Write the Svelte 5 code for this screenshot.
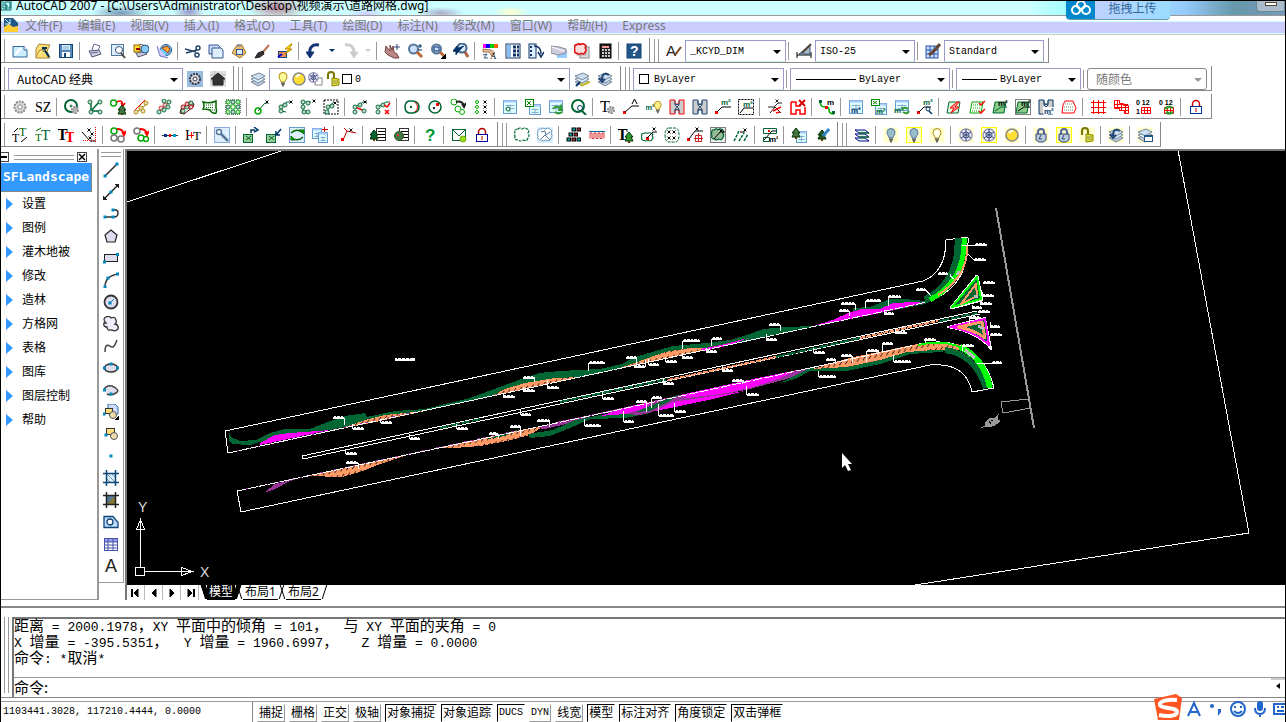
<script lang="ts">
	type Select = { label: string; value: string; width: number; deco?: string; pad?: number; disabled?: boolean; big?: boolean };
	type Item = string | Select;

	// Small helpers that build the 16x16 toolbar glyphs
	const p = (d: string, stroke = '#000', fill = 'none', w = 1) =>
		`<path d="${d}" stroke="${stroke}" fill="${fill}" stroke-width="${w}"/>`;
	const r = (x: number, y: number, w: number, h: number, fill: string, stroke = 'none') =>
		`<rect x="${x}" y="${y}" width="${w}" height="${h}" fill="${fill}" stroke="${stroke}"/>`;
	const c = (x: number, y: number, rad: number, stroke = '#060', fill = 'none', w = 1) =>
		`<circle cx="${x}" cy="${y}" r="${rad}" stroke="${stroke}" fill="${fill}" stroke-width="${w}"/>`;
	const t = (x: number, y: number, s: string, size: number, fill = '#000', family = 'Liberation Serif', weight = 400) =>
		`<text x="${x}" y="${y}" font-size="${size}" fill="${fill}" font-family="${family}, serif" font-weight="${weight}">${s}</text>`;

	const node = (x: number, y: number, col = '#063') => c(x, y, 2, col, '#fff') + r(x - 0.5, y - 0.5, 1, 1, col);
	const cross = (x: number, y: number, col = '#000') => p(`M${x - 1.5} ${y - 1.5}l3 3m0-3l-3 3`, col);
	const m2 = (x: number, y: number, col = '#063') => t(x, y, 'm²', 8, col, 'Liberation Sans', 700);
	const tree = (x: number, y: number, col = '#063') =>
		p(`M${x} ${y}l-4 5h2l-2 4h8l-2-4h2z`, '#030', col) + p(`M${x} ${y + 9}v2`, '#630', 'none', 2);
	const gear = (x: number, y: number, col = '#888', k = 5) =>
		`<circle cx="${x}" cy="${y}" r="${k}" fill="#ddd" stroke="${col}" stroke-width="2" stroke-dasharray="2 1"/>` + c(x, y, k / 2.5, col, '#fff');
	const sheet = (x: number, y: number, w: number, h: number) =>
		r(x, y, w, h, '#dff', '#69c') + r(x, y, w, 2, '#acf') +
		p(`M${x + 2} ${y + 5}h${w - 4}M${x + 2} ${y + 8}h${w - 4}M${x + w / 2} ${y + 4}v${h - 5}`, '#8ac');
	const bulb = (fill: string, col: string) =>
		p('M6 11C6 9 4 8 4 5.500A4 4 0 0 1 12 5.500C12 8 10 9 10 11Z', col, fill) + p('M6 12.500h4M7 14.500h2', '#666', 'none', 2);
	const hot = (inner: string, framed = false) => r(0.5, 0.5, 15, 15, '#ffc', framed ? '#ff0' : 'none') + inner;
	const lock = (body: string, col: string) => p('M4.500 7V5a3.500 3.500 0 0 1 7 0V7', col, 'none', 1.5) + r(2.5, 7.5, 11, 7, '#fff', body) + p('M8 9v4', col);
	const padlock = p('M5 8V5a3 3 0 0 1 6 0V8', '#569', 'none', 2) + p('M3 7h10v6l-3 2H6L3 13Z', '#347', '#bcd') + p('M8 8l-2 4h3', '#347');
	const openlock = p('M3 8V4a3 3 0 0 1 6 0v3', '#770', 'none', 2) + p('M7 7l7 1v6l-7 1z', '#880', '#dd3') + p('M8 10h5M8 12h5', '#996');
	const layers = p('M1 11l8-3 6 3-7 4z', '#789', '#bcd') + p('M1 8l8-3 6 3-7 4z', '#789', '#def') + p('M1 5l8-3 6 3-7 4z', '#789', '#cde');
	const ball = c(8, 8, 6, '#888', '#fd3', 1.5) + p('M5 6a4 4 0 0 1 4-2', '#fff', 'none', 2);
	const flake = c(8, 8, 6, '#99b', '#eef', 1.5) + p('M8 2v12M3 5l10 6M3 11l10-6', '#347') + c(8, 8, 3, '#347');
	const blob = 'M4 2q2-2 4 0 3-2 5 0 3 1 1 4 2 3 0 5-1 4-5 2-3 2-5 0-4 0-3-4-1-3 0-4-1-3 3-3z';
	const plot = 'M3 3h11l-2 11H1z';
	const gate = (col: string) => p('M1 1h5v4h4V1h5v14h-5v-4H6v4H1z', col, '#ccc') + p('M6 5.500h4M6 10.500h4M6 2v4l2 2 2-2V2M6 14v-4l2-2 2 2v4', '#357', 'none', 1);
	const magnifier = c(6.5, 6, 4.5, '#579', '#cdf', 2) + p('M10 9l5 5', '#b63', 'none', 3);
	const printer = p('M5 7L7 1l6 2-2 5', '#669', '#fff') + p('M2 8l10-1 2 4-9 3z', '#557', '#ccd') + p('M4 10l7-1', '#669', 'none', 1);

	const icons: Record<string, string> = {
		new: p('M1 3.500H12L15 7V14H1Z', '#369', '#cef') + p('M12 3v4h3', '#369', '#fff') + p('M3 12L9 5', '#fff', 'none', 2),
		open: p('M1 6L4 1l11 1-3 6 3 7H1z', '#a83', '#fd7') + p('M14 14L9 6M8 9V5h4', '#035', 'none', 2) + p('M1 14L5 7h5', '#a83', '#fe9'),
		save: r(1.5, 1.5, 13, 13, '#58b', '#147') + r(4, 2, 8, 5, '#def') + r(4, 9, 8, 5, '#fff') + r(6, 10, 2, 4, '#147') + p('M5 4h6M5 6h6', '#7ac'),
		print: printer,
		preview: r(1.5, 1.5, 12, 11, '#def', '#579') + c(9, 7, 3.5, '#357', '#fff') + p('M11 10l4 5', '#543', 'none', 2),
		publish: printer + r(1, 2, 6, 7, '#fd3', '#960') + c(12, 6, 4, '#357', '#8cf') + r(3, 5, 4, 2, '#900'),
		globe: c(10, 7, 5.5, '#358', '#6cf') + p('M6 5l5-2 3 3-2 4z', '#a31', '#fa3') + p('M1 3l3 10 8 2', '#77c', '#ccf'),
		cut: p('M0 6l11 3M1 10l11-3', '#246', 'none', 1.5) + c(13, 5, 2, '#246', 'none', 1.5) + c(12, 12, 2, '#246', 'none', 1.5),
		copy: p('M1 2h9l2 2v7H1z', '#358', '#cdf') + p('M4 5h9l2 2v8H4z', '#358', '#def'),
		paste: p('M1 10L6 2h5l4 8-6 5z', '#973', '#eb6') + r(5.5, 6.5, 6, 5, '#def', '#358') + r(6, 1, 4, 3, '#999'),
		brush: p('M15 2L9 9', '#b75', 'none', 2) + p('M1 15l3-5 5-2 1 3-4 3z', '#222', '#333'),
		match: r(1.5, 8.5, 8, 6, '#e85', '#147') + p('M14 1L8 6h4L8 11l7-5h-3l3-5z', '#b80', '#fe0') + p('M1 14l4-3', '#00c', 'none', 2),
		undo: p('M13 2C6 1 3 5 4 10', '#137', 'none', 3) + p('M0 9h8l-4 6z', '#137', '#137'),
		redo: p('M3 2C10 1 12 5 12 10', '#ccc', 'none', 3) + p('M8 9h8l-4 6z', '#ccc', '#ccc'),
		pan: p('M2 3l4 5V2l2 5 1-4 1 6 3 2 2 4h-5L4 12 1 9z', '#744', '#b88') + p('M13 1v6M10 4h6', '#347'),
		zoomrt: magnifier + p('M11 3h4M13 1v4M11 7h4', '#036'),
		zoomwin: magnifier + p('M4 4h5v4H4z', '#036') + p('M16 11v5h-5z', '#000', '#000'),
		zoomprev: c(9, 5, 4.5, '#468', '#def', 2) + p('M12 9l3 5', '#a64', 'none', 3) + p('M3 12V6l8-3M0 8l4-5 1 6z', '#036', '#036'),
		props: r(1, 1, 3, 4, '#f0f') + r(4, 1, 4, 4, '#00f') + r(8, 1, 4, 4, '#0c0') + r(12, 1, 4, 4, '#f60') + p('M1 6l8 1 4 3-3 3-3-4H1z', '#975', '#eb9') + t(8, 16, 'A', 9) + p('M1 12l4-1-3 4h4', '#357'),
		dc: r(1, 1, 14, 14, '#fff', '#136') + r(2, 2, 4, 12, '#8be') + [3, 7, 11].map((y) => r(8.5, y, 2, 2, '#fff', '#136') + r(12.5, y, 1, 2, '#fff', '#136')).join(''),
		palettes: r(1, 1, 7, 14, '#def', '#136') + p('M3 3v2M3 7v2M3 11v2', '#136', 'none', 2) + p('M6 3q7 0 7 8M10 9l3 5 3-5', '#136', 'none', 1.5),
		sheets: r(6, 7, 10, 8, '#9cf') + p('M0 3l8 1 7 2v4l-8 2-7-2z', '#889', '#ccd') + p('M1 4l12 4', '#fff'),
		markup: r(6, 4, 9, 11, '#ddd', '#888') + r(3, 2, 9, 10, '#fff', '#aaa') + `<g transform="scale(.8)">${p(blob, '#d11', '#fdd', 2)}</g>`,
		calc: r(3, 1, 11, 14, '#222', '#000') + r(5, 3, 7, 2, '#f99') + p('M5 7h8M5 10h8M5 13h8', '#fff', 'none', 1.5) + p('M7.500 6v8M10.500 6v8', '#222'),
		help: r(1, 1, 14, 14, '#258', '#147') + t(4, 13, '?', 14, '#fff', 'Liberation Sans', 700),
		textstyle: t(0, 13, 'A', 15, '#222', 'Liberation Sans') + p('M15 4l-6 8', '#742', 'none', 2),
		dimstyle: p('M1 9v6M15 9v6M1 12h14', '#000') + p('M3 11L14 2v9z', '#357', '#abc') + p('M15 1L6 10', '#543', 'none', 2),
		tablestyle: r(1, 3, 12, 12, '#cdf', '#25a') + p('M1 7h12M1 11h12M5 3v12M9 3v12', '#25a') + p('M15 1L8 9l-4 3', '#643', 'none', 3),
		wsgear: r(0, 0, 16, 16, '#9bd') + gear(8, 8, '#334', 5),
		wshome: r(0, 0, 16, 16, '#ddd') + p('M0 4h16M0 10h16M5 0v16', '#bbb') + p('M3 14V8L1 8l7-6 7 6h-2v6z', '#222', '#333'),
		layers,
		layprev: layers + p('M2 15l4-4', '#036', 'none', 2) + p('M6 13l3 1 7-3', '#cb2', 'none', 2),
		layundo: layers + p('M12 4Q5 0 5 9M2 7l3 4 3-3', '#247', 'none', 2),
		gear: gear(8, 8, '#888', 5.5),
		sz: t(0, 13, 'SZ', 14),
		treegear: c(7, 7, 6, '#063', '#fff', 2) + c(7, 7, 1, '#063') + gear(11, 11, '#888', 3),
		nodes3: p('M4 3v9h9M4 12L13 2', '#063', 'none', 1.5) + node(3, 3) + node(13, 3) + node(4, 13) + node(13, 13),
		treefrom: c(3.5, 4, 3, '#0a0', '#fff', 1.5) + p('M7 3q5-3 6 3M11 4l2 3 2-3', '#f00', 'none', 1.5) + tree(12, 6, '#474'),
		row1: p('M1 12L12 1', '#f00') + p('M2 15L15 4', '#960') + node(3, 13, '#a80') + node(8, 9, '#a80') + node(13, 4, '#a80') + node(10, 12, '#a80'),
		row2: p('M3 13L13 3', '#900') + node(3, 13) + node(5, 9, '#c33') + node(8, 11) + node(9, 6, '#c33') + node(12, 8) + node(13, 3) + node(8, 2),
		row3: p('M2 10l9-8 4 3-1 3-9 7-4-1z', '#500', '#fff') + node(4, 12) + node(4, 8, '#a00') + node(8, 8) + node(8, 5, '#a00') + node(12, 4) + node(12, 8, '#a00'),
		flag: p('M1 3q7 2 13-1v7q1 3 0 5-4 1-6-3-3-1-7-1 2-4 0-7z', '#060', '#fff', 1.5) + `<path d="M4 6h8M4 8.500h8M8 11h5" stroke="#060" stroke-dasharray="1 1"/>`,
		grid9: `<rect x="1" y="1" width="14" height="14" fill="none" stroke="#000" stroke-dasharray="1 1"/>` + [3, 13].map((x) => node(x, 3, '#0a0') + node(x, 13, '#0a0')).join('') + r(6, 6, 4, 4, '#fff', '#0a0') + node(8, 3) + node(8, 13) + node(3, 8) + node(13, 8),
		pick1: c(4, 12, 3, '#0a0', '#fff', 1.5) + p('M4 12L11 4h3', '#063') + cross(13, 3),
		pick2: p('M4 12V7l6-4h4M4 12l5 1', '#063') + node(4, 12) + node(4, 8) + node(8, 6) + cross(14, 3),
		pick3: p('M3 3h8M3 3v10h4', '#063') + node(3, 3) + node(3, 8) + node(4, 13) + node(8, 4) + node(8, 13) + cross(14, 2),
		pick4: `<rect x="1" y="1" width="14" height="14" fill="none" stroke="#000" stroke-dasharray="2 1"/>` + p('M5 13V8l6-5', '#063') + node(4, 13) + node(5, 8) + node(9, 7) + cross(12, 4),
		link1: p('M3 8L11 3h4', '#063') + p('M3 8l10 4', '#f00', 'none', 1.5) + node(3, 8) + node(3, 13) + node(8, 6) + node(12, 12) + cross(13, 3),
		link2: p('M3 8L11 3h4', '#063') + node(3, 8) + node(3, 13) + node(8, 6) + p('M9 6l3 2 3-4M10 11l4 4m0-4l-4 4', '#f00', 'none', 1.500),
		ring: p('M5 2h4q6 1 6 6t-6 6H5Q1 13 1 8t4-6z', '#063', 'none', 1.5) + p('M11 3q5 5 0 10', '#c00', 'none', 1) + r(6, 7, 2, 2, '#063'),
		circlered: c(8, 8, 6, '#063', '#fff', 1.5) + r(6, 8, 2, 2, '#222') + r(9, 4, 3, 3, '#f00'),
		treecopy: c(4, 3, 3, '#0a0', '#fff') + c(8, 10, 3, '#0a0', '#fff') + c(12, 13, 2.500, '#0a0', '#fff') + p('M6 3q5-2 8 3M12 5l2 3 2-4', '#222', 'none', 2),
		dots: [3, 8, 13].map((y) => c(4, y, 1.5, '#0a0') + cross(12, y)).join(''),
		sheetdot: sheet(1.5, 1.5, 13, 13) + c(6, 10, 2, '#063', '#fff'),
		sheetxl: sheet(4.5, 5.5, 11, 10) + r(0.5, 0.5, 8, 7, '#fff', '#080') + p('M2 2l4 4m0-4L2 6', '#080'),
		sheetref: sheet(1.5, 1.5, 13, 12) + p('M5 10q3-4 7-1l1-2 1 4h-4M14 13q-4 3-7 0', '#393', 'none', 2),
		ringq: c(7, 7, 6, '#063', '#fff', 2) + c(9, 9, 2.500, '#036', '#fff') + p('M10 11l5 5', '#063', 'none', 2),
		tgear: t(0, 13, 'T', 16, '#000') + gear(11, 11, '#888', 3),
		leaderA: r(0, 12, 3, 3, '#f00') + p('M2 13L9 7h7M9 5l2.500-5L14 5', '#000'),
		m2bulb: m2(-1, 11) + `<g transform="translate(5 1) scale(.85)">${bulb('#fe8', '#a80')}</g>`,
		gatered: gate('#f00'),
		gateblue: gate('#247'),
		leaderm2: r(0, 12, 3, 3, '#f00') + p('M2 13L7 8h9', '#000') + m2(6, 6),
		boxm2: `<rect x=".5" y=".5" width="15" height="15" fill="none" stroke="#000" stroke-dasharray="2 1"/>` + p('M2 14l4-5h9', '#000') + m2(5, 8),
		xlines: p('M1 8h6l4-4h4M3 14l5-6 6 6', '#222') + cross(10, 2, '#222') + p('M6 12l8-4M9 14l4-1', '#f00', 'none', 1.5),
		gatex: p('M1 3h5v4h4V5M1 3v12h5v-4h4v4h5V8', '#f00', '#fff', 1.5) + p('M9 1l6 6m0-6L9 7', '#d00', 'none', 2),
		curve: p('M1 2q0 6 5 6t4 4q1 3 5 3', '#0a0', 'none', 1.500) + t(8, 6, 'm', 8, '#000', 'Liberation Sans', 700) + r(0, 1, 3, 3, '#063') + r(6, 7, 3, 3, '#f00') + r(13, 12, 3, 3, '#063'),
		shm2: sheet(1.5, 1.5, 13, 13) + m2(3, 14, '#036'),
		xlm2: sheet(4.5, 4.5, 11, 11) + r(0.5, 0.5, 8, 6, '#fff', '#080') + p('M2 2l4 3m0-3L2 5', '#080') + m2(5, 15),
		refm2: sheet(1.5, 1.5, 13, 10) + m2(0, 14) + p('M8 11q2-4 6-1M15 12q-2 4-6 1', '#393', 'none', 2),
		leadq: r(0, 12, 3, 3, '#f00') + p('M2 13L7 8h7', '#000') + m2(6, 6) + c(11, 10, 2, '#036') + p('M12 12l3 3', '#036', 'none', 1.5),
		plotbolt: p(plot, '#063', '#dfd') + p('M11 3L4 9h4l-3 5 8-6H9l4-5z', '#f00', '#f99'),
		plotcheck: p(plot, '#0a0', '#fff') + `<path d="M4 6h8M4 9h7M3 12h7" stroke="#0a0" stroke-dasharray="1 1"/>` + p('M10 4l2 2 4-4M10 12l2 2 4-4', '#f00', 'none', 1.500),
		plotm2: p(plot, '#063', '#8c8') + p('M3 12L9 8h6', '#063') + m2(6, 7, '#000'),
		plotboxm2: `<rect x=".5" y=".5" width="15" height="15" fill="none" stroke="#000" stroke-dasharray="1 1"/>` + p(plot, '#063', '#8c8') + m2(6, 7, '#000') + p('M3 12l6-4h6', '#000'),
		binm2: gate('#036') + r(5, 8, 11, 7, '#fff') + m2(6, 15, '#036'),
		plotred: p('M4 2h8l3 7-2 5H1l1-8z', '#f00', '#fff') + `<path d="M4 5h8M3 8h10M3 11h10" stroke="#696" stroke-dasharray="1 1"/>`,
		gridred: p('M3.500 1v14M8.500 1v14M13.500 1v14M1 3.500h15M1 8.500h15M1 13.500h15', '#f00'),
		meshred: p('M1.500 1.500h5v3h4v2h5v8h-4v-3h-5v-2h-5zM4.500 1v9M8.500 4v8M12.500 6v9M1 5.500h14M1 8.500h14M6 11.500h9', '#f00'),
		gridnum: p('M5.500 8.500h9v6h-9zM8.500 8v7M11.500 8v7M5 11.500h10', '#f00') + t(0, 6, '0 12', 7, '#000', 'Liberation Sans', 700) + t(0, 15, '1', 7, '#000', 'Liberation Sans', 700),
		gridnumref: p('M5.500 8.500h9v6h-9zM8.500 8v7M11.500 8v7M5 11.500h10', '#f00') + t(0, 6, '0 12', 7, '#000', 'Liberation Sans', 700) + p('M6 10q3-4 8-1M14 13q-4 3-7 0', '#393', 'none', 2.5),
		lock: lock('#039', '#c00'),
		lockred: lock('#009', '#a00'),
		tflip: p('M2 5L6 1M9 15l6-5', '#000') + t(0, 15, 'T', 12) + t(7, 9, 'T', 12, '#060'),
		ttree: t(0, 14, 'T', 11, '#060') + t(6, 13, 'T', 15, '#063') + p('M1 4l5-3', '#060'),
		tt: t(-1, 13, 'T', 16, '#000', 'Liberation Serif', 700) + t(7, 15, 'T', 15, '#f00', 'Liberation Serif', 700),
		tdiag: p('M1 5l8 9h6', '#000') + cross(8, 3) + cross(11, 7) + cross(9, 11) + `<path d="M14.500 0v16M2 13.500h12" stroke="#f00" stroke-dasharray="1 1"/>`,
		replant: c(4, 4, 3, '#0a0', '#fff', 1.500) + c(4, 11, 3, '#777', '#fff', 1.500) + c(11, 12, 3, '#777', '#fff', 1.500) + p('M7 2q6 0 7 5M12 5l2 3 2-4', '#f00', 'none', 2),
		replant2: c(4, 4, 3, '#777', '#fff', 1.500) + c(8, 11, 3, '#0a0', '#fff', 1.500) + c(13, 12, 2.500, '#0a0', '#fff', 1.500) + p('M7 2q6 0 7 5M12 5l2 3 2-4', '#f00', 'none', 2),
		hline: p('M0 8.500h16', '#333') + r(2, 7, 3, 3, '#039') + r(7, 7, 2, 3, '#f00') + r(11, 7, 3, 3, '#09c'),
		tplus: t(0, 13, 'I', 14) + t(8, 13, 'T', 13) + p('M3 8.500h6M6.500 5v6', '#f00'),
		wrench: r(0.5, 0.5, 15, 15, '#def', '#8ad') + p('M6 6l8 8', '#579', 'none', 2.5) + c(5, 5, 2.5, '#579', '#fff', 1.5),
		out1: r(0.5, 7.5, 9, 8, '#9c9', '#063') + p('M3 9l5 4m0-4l-5 4', '#063') + p('M8 6V3h4M11 0l4 3-4 2', '#036', 'none', 1.5),
		in1: r(0.5, 7.5, 9, 8, '#9c9', '#063') + p('M3 9l5 4m0-4l-5 4', '#063') + p('M15 2l-4 5M10 4v4h4', '#036', 'none', 1.500),
		syncg: r(0.5, 0.5, 15, 15, '#def', '#69c') + p('M2 6q5-5 11-1M14 10q-5 5-11 1', '#060', 'none', 1.5) + p('M10 3l5 0v4zM6 13H2V9z', '#060', '#0a0'),
		pagesplus: sheet(0.5, 1.5, 9, 10) + sheet(6.5, 5.5, 9, 10) + p('M12.500 0v5M10 2.500h6', '#d00'),
		vx: r(0, 11, 3, 3, '#f00') + p('M2 13L6 4 3 1M6 4l9 2', '#c00') + cross(10, 3, '#222'),
		treelist: r(6.5, 1.5, 9, 12, '#fff', '#333') + p('M8 4.500h7M8 7.500h7M8 10.500h7', '#000') + tree(4, 3, '#063'),
		bushlist: r(6.5, 1.5, 9, 12, '#fff', '#333') + p('M8 4.500h7M8 7.500h7M8 10.500h7', '#000') + c(6, 9, 4.500, '#252', '#474') + r(4, 7, 2, 2, '#d33'),
		qgreen: t(3, 14, '?', 17, '#093', 'Liberation Sans', 700),
		mail: r(1.5, 2.5, 13, 11, '#fff', '#063') + p('M1 2l7 7 7-7', '#063') + c(12, 12, 3, '#7a0', '#9d2'),
		cloud: `<g stroke-dasharray="3 1">${p(blob, '#063', '#fff', 1.2)}</g>`,
		cloud2: r(0, 0, 16, 16, '#def') + p(blob, '#69b', '#fff', 1) + p('M4 5l4-1 1 4 4-3M4 12l4-4 5 5', '#579'),
		blocks: [[6, 1], [11, 1], [3, 6], [8, 6], [1, 11], [6, 11], [11, 11]].map(([x, y], i) => r(x, y, 3.500, 3, i % 2 ? '#a33' : '#0aa', '#000')).join(''),
		wave: p('M1 11.500V6h2v5.500h2V6h2v5.500h2V6h2v5.500h2V6h2v5.500', '#d33') + p('M0 4.500h16', '#069'),
		ttreeg: t(-1, 13, 'T', 16, '#000', 'Liberation Serif', 700) + tree(11, 5, '#393'),
		cloudpick: `<g transform="translate(0 5) scale(.8 .65)">${p(blob, '#063', '#fff', 1.5)}</g>` + r(5, 10, 3, 3, '#f00') + p('M6 11l6-6h4', '#000') + cross(13, 2),
		oval: `<g stroke-dasharray="3 1">${p('M5 1h6q4 0 4 7t-4 7H5q-4 0-4-7t4-7z', '#063')}</g>` + cross(5, 5) + cross(10, 5) + cross(5, 11) + cross(10, 11),
		mtext: r(0, 11, 3, 3, '#f00') + p('M2 12l6-8h8', '#000') + cross(10, 2) + p('M8.500 8.500h6v6h-6zM11.500 6v9M7 11.500h9', '#c22'),
		hatchbox: `<rect x=".5" y=".5" width="15" height="15" fill="#eee" stroke="#000" stroke-dasharray="1 1"/>` + `<g transform="translate(1 1) scale(.85)">${p(blob, '#063', '#9b9', 1.5)}</g>` + p('M4 12l6-7h5', '#000') + cross(11, 4),
		slashes: `<g stroke-dasharray="3 1">${p('M1 14L6 4M6 14l5-8M11 14l4-7', '#063', 'none', 1.5)}</g>` + cross(12, 3) + p('M7 5h5', '#000'),
		plan: p('M1.500 1.500h13v5h-13zM1.500 10.500h6v4h-6z', '#063', '#fff') + p('M2 13L10 4h4', '#000') + r(6, 3, 2, 2, '#f00') + m2(7, 15, '#000'),
		treetable: sheet(5.5, 4.500, 10, 11) + tree(5, 1, '#474'),
		treepen: tree(8, 3, '#252') + p('M15 2L9 9', '#38c', 'none', 3),
		stack: p('M1 3h10l4 3H5zM1 7h10l4 3H5zM1 11h10l4 3H5z', '#009', '#dfd') + p('M5 6h10M5 10h10', '#070'),
		bulbOff: hot(bulb('#9bc', '#579')),
		bulbOffF: hot(bulb('#9bc', '#579'), true),
		bulbOn: hot(bulb('#ffe', '#a80')),
		flake: hot(flake),
		flakeF: hot(flake, true),
		sun: hot(ball),
		pad: hot(padlock),
		padF: hot(padlock, true),
		padOpen: hot(openlock),
		layhot: hot(layers + p('M12 4Q5 0 5 9M2 7l3 4 3-3', '#247', 'none', 2)),
		laywin: hot(layers) + r(7.5, 8.5, 8, 6, '#fff', '#258') + r(7, 8, 9, 2, '#258')
	};

	const blue = (x: number, y: number) => r(x - 1.5, y - 1.5, 3, 3, '#08b');
	const drawTools: [string, string][] = [
		['直线', p('M2 14L14 2', '#222', 'none', 1.5) + blue(2, 14) + blue(14, 2)],
		['构造线', p('M1 15L15 1', '#222', 'none', 1.5) + p('M0 12v4h4zM16 4V0h-4z', '#222', '#222') + blue(8, 8)],
		['多段线', p('M2 11h9q4 0 4-4t-5-3', '#333', 'none', 1.5) + blue(2, 11) + blue(10, 11) + blue(10, 4)],
		['正多边形', p('M8 2l6 5-2 7H4L2 7z', '#222', '#dde', 1.2)],
		['矩形', r(1.5, 4.5, 13, 7, '#dde', '#222') + blue(1.5, 12) + blue(14.5, 4.5)],
		['圆弧', p('M2 15Q2 4 15 2', '#333', 'none', 1.5) + blue(2, 15) + blue(5, 6) + blue(14.5, 2)],
		['圆', c(8, 8, 6.5, '#333', '#dde', 1.8) + p('M7 9l4-4', '#08b') + blue(7, 9)],
		['修订云线', p('M3 7Q-1 3 3 1q3-2 5 1 4-2 5 2 1 3-1 4 4 1 3 5-3 3-6 1-5 1-5-3-4 0-3-4z', '#333', '#eef', 1.3)],
		['样条曲线', p('M2 14C2 2 8 10 10 9S13 4 14 2', '#444', 'none', 1.5)],
		['椭圆', `<ellipse cx="8" cy="8" rx="6.500" ry="4" fill="#dde" stroke="#333" stroke-width="1.500"/>` + blue(1.5, 8) + blue(8, 4) + blue(14.5, 8)],
		['椭圆弧', p('M4 12Q8 14 13 11T9 4Q3 3 1 8', '#444', '#dde', 1.5) + blue(1.5, 8) + blue(8, 12)],
		['插入块', p('M5 0h7l3 3v7H5z', '#369', '#cdf') + r(2.5, 4.5, 7, 5, '#fd7', '#333') + c(10, 11, 3.5, '#555', '#eda') + blue(1, 10) + p('M16 12v4h-4z', '#000', '#000')],
		['创建块', r(3.5, 2.5, 8, 6, '#fd7', '#333') + c(11, 10, 3.5, '#555', '#eda') + blue(3, 9)],
		['点', blue(8, 8)],
		['图案填充', r(3, 3, 10, 10, '#def') + p('M3 3l10 10M3 8l5 5M8 3l5 5', '#69a') + p('M0 3.500h16M0 12.500h16M3.500 0v16M12.500 0v16', '#147', 'none', 1.5)],
		['渐变色', r(3, 3, 10, 10, '#579') + p('M3 13L13 3v10z', 'none', '#873') + p('M0 3.500h16M0 12.500h16M3.500 0v16M12.500 0v16', '#222', 'none', 1.5)],
		['面域', p('M1 2.500h9l5 6v5H1z', '#147', '#bdf', 1.3) + c(7, 8, 3, '#147', '#fff', 1.3)],
		['表格', r(1.5, 2.5, 13, 12, '#fff', '#45a') + r(2, 3, 12, 3, '#99e') + p('M2 6h12M2 9h12M2 12h12M5 3v11M10 3v11', '#45a')],
		['多行文字', t(2, 14, 'A', 18, '#222', 'Liberation Sans')]
	];

	const sw = r(0.5, 3.5, 9, 9, '#fff', '#000');
	const layerDeco =
		`<svg width="90" height="16">${bulb('#ff9', '#a80')}<g transform="translate(16)">${ball}</g><g transform="translate(32)">${r(8, 7, 7, 7, '#fff', '#888')}${`<g transform="scale(.8)">${flake}</g>`}</g><g transform="translate(50)">${openlock}</g><g transform="translate(67)">${sw}</g></svg>`;
	const swatch = `<svg width="12" height="16">${sw}</svg>`;
	const rule = (w: number) => `<svg width="${w}" height="16">${p(`M0 8.500h${w}`)}</svg>`;

	const split = (s: string) => s.split(' ');

	const rows: Item[][][] = [
		[
			split('new open save | print preview publish globe | cut copy paste brush match | undo ▾ redo ▿ | pan zoomrt zoomwin zoomprev | props dc palettes sheets markup calc | help'),
			[
				'textstyle', { label: '文字样式', value: '_KCYD_DIM', width: 101 }, '|',
				'dimstyle', { label: '标注样式', value: 'ISO-25', width: 100 }, '|',
				'tablestyle', { label: '表格样式', value: 'Standard', width: 100 }
			]
		],
		[
			[{ label: '工作空间', value: 'AutoCAD 经典', width: 175, pad: 8, big: true }, 'wsgear', 'wshome'],
			['layers', { label: '图层', value: '0', width: 301, pad: 85, deco: layerDeco }, 'layprev', 'layundo'],
			[
				{ label: '颜色', value: 'ByLayer', width: 151, pad: 20, deco: swatch }, '|',
				{ label: '线型', value: 'ByLayer', width: 160, pad: 68, deco: rule(60) }, '|',
				{ label: '线宽', value: 'ByLayer', width: 125, pad: 43, deco: rule(35) }, '|',
				{ label: '打印样式', value: '随颜色', width: 120, pad: 8, disabled: true, big: true }
			]
		],
		[
			split('gear sz | treegear nodes3 treefrom row1 row2 row3 flag grid9 | pick1 pick2 pick3 pick4 | link1 link2 | ring circlered treecopy dots | sheetdot sheetxl sheetref ringq | tgear leaderA m2bulb gatered gateblue leaderm2 boxm2 | xlines gatex | curve | shm2 xlm2 refm2 leadq | plotbolt plotcheck plotm2 plotboxm2 binm2 plotred | gridred meshred gridnum gridnumref | lock')
		],
		[
			split('tflip ttree tt tdiag | replant replant2 | hline tplus | wrench | out1 in1 syncg pagesplus | vx | treelist bushlist | qgreen | mail lockred'),
			split('cloud cloud2 | blocks wave | ttreeg cloudpick oval mtext hatchbox slashes | plan | treetable treepen'),
			split('stack | bulbOff bulbOffF bulbOn | flake flakeF sun | pad padF padOpen | layhot | laywin')
		]
	];

	const menus = ['文件(F)', '编辑(E)', '视图(V)', '插入(I)', '格式(O)', '工具(T)', '绘图(D)', '标注(N)', '修改(M)', '窗口(W)', '帮助(H)', 'Express'];
	const sections = ['设置', '图例', '灌木地被', '修改', '造林', '方格网', '表格', '图库', '图层控制', '帮助'];

	const history = [
		'距离 = 2000.1978，XY 平面中的倾角 = 101，  与 XY 平面的夹角 = 0',
		'X 增量 = -395.5351，  Y 增量 = 1960.6997，   Z 增量 = 0.0000',
		'命令: *取消*'
	];
	// Latin and full-width runs are set at different sizes
	const runs = (s: string) => s.match(/[\u3000-\uffff]+|[^\u3000-\uffff]+/g) ?? [];

	const toggles: [string, boolean][] = [
		['捕捉', false], ['栅格', false], ['正交', false], ['极轴', false], ['对象捕捉', true], ['对象追踪', true],
		['DUCS', true], ['DYN', false], ['线宽', false], ['模型', true], ['标注对齐', true], ['角度锁定', true], ['双击弹框', true]
	];

	// Plant callouts: x, y, length, leader x, leader end y
	const callouts = [
		[333, 418, 11, 344, 425], [353, 429, 11, 352, 424], [381, 423, 11, 380, 419], [503, 397, 12, 503, 393],
		[523, 391, 12, 523, 387], [523, 378, 12, 534, 382], [547, 388, 12, 547, 380], [589, 363, 16, 588, 371],
		[410, 439, 10, 409, 434], [346, 454, 11, 345, 449], [346, 463, 12, 358, 469], [457, 429, 11, 456, 424],
		[521, 415, 10, 520, 409], [603, 399, 11, 602, 392], [510, 427, 11, 520, 436], [489, 434, 9, 498, 439],
		[537, 421, 13, 549, 427], [585, 426, 16, 584, 419], [683, 341, 17, 682, 349], [712, 339, 10, 711, 346],
		[626, 358, 11, 636, 365], [634, 367, 11, 645, 360], [649, 365, 10, 648, 359], [666, 362, 11, 665, 357],
		[682, 358, 11, 682, 353], [706, 352, 11, 706, 348], [769, 325, 11, 780, 331], [766, 340, 11, 766, 334],
		[841, 304, 14, 855, 310], [866, 301, 15, 865, 308], [888, 297, 13, 888, 306], [839, 311, 10, 849, 316],
		[884, 314, 10, 884, 310], [895, 333, 12, 895, 328], [814, 353, 11, 813, 348], [722, 371, 11, 722, 366],
		[663, 384, 11, 663, 378], [732, 381, 12, 742, 384], [747, 395, 12, 746, 386], [826, 360, 10, 835, 364],
		[841, 356, 11, 852, 363], [867, 351, 12, 866, 362], [882, 344, 11, 882, 352], [894, 362, 17, 893, 355],
		[819, 377, 17, 818, 371], [924, 340, 12, 925, 343], [636, 402, 11, 646, 412], [652, 398, 10, 651, 408],
		[659, 416, 15, 658, 404], [675, 412, 11, 674, 403], [624, 422, 10, 623, 411], [975, 245, 12, 975, 245],
		[974, 260, 12, 974, 260], [938, 274, 10, 950, 276], [916, 290, 10, 926, 292], [983, 283, 12, 983, 283],
		[982, 296, 12, 982, 292], [980, 304, 12, 980, 300], [972, 308, 10, 972, 305], [978, 312, 12, 978, 312],
		[969, 318, 12, 969, 324], [990, 327, 10, 990, 322], [990, 335, 12, 985, 335], [962, 346, 12, 962, 351],
		[992, 363, 10, 992, 363]
	];
	const shapes: [string, string][] = [
		['#063', '229,432 231,437 240,441 256,440 270,433 285,429 310,429 325,423 345,416 365,413 367,417 395,411 425,409 470,398 505,385 530,376 539,373 560,371 600,369 622,364 635,357 673,346 707,343 730,340 747,335 763,329 787,327 813,326 840,321 740,342 580,377 420,411 330,430 300,434 270,439 250,445 232,444 229,441'],
		['#f0f', '260,443 275,435 290,433 318,431 330,430 260,445'],
		['#f96', '336,430 365,420 385,415 425,411 380,421'],
		['#f96', '490,397 505,389 525,383 555,378 580,377 520,390'],
		['#f96', '613,370 640,361 665,352 690,348 704,348 700,351 640,364'],
		['#f0f', '700,349 725,344 748,338 730,345 705,351'],
		['#063', '853,308 870,307 890,299 905,299 925,301 940,296 925,304 855,318'],
		['#f0f', '813,326 833,320 848,313 862,309 880,309 893,303 915,302 925,303 880,313 830,323'],
		['#939', '264,493 275,484 310,475 290,481 275,489'],
		['#f96', '308,476 358,465 407,455 380,464 363,471 342,477'],
		['#f96', '440,448 487,438 520,430 545,425 530,435 507,441 480,446 455,448'],
		['#939', '537,428 560,421 600,413 570,423 545,429'],
		['#063', '490,438 520,429 505,436 488,439'],
		['#063', '528,434 553,430 575,420 600,415 640,410 665,400 680,395 670,403 650,413 625,418 590,419 570,428 550,436 530,438'],
		['#939', '590,415 680,395 810,368 790,378 750,389 690,402 640,415 610,413'],
		['#f0f', '600,416 630,406 652,402 645,408 625,414'],
		['#f0f', '680,395 730,384 767,376 798,370 780,378 753,387 727,393 687,398'],
		['#f0f', '655,411 673,402 707,397 745,391 713,399 680,406 640,414'],
		['#063', '636,412 660,402 680,394 668,402 650,411'],
		['#063', '780,383 810,368 860,364 893,354 910,349 930,347 955,349 940,352 910,354 880,364 847,371 810,371 795,379'],
		['#f96', '812,369 853,357 893,349 912,345 930,342 958,344 966,350 933,350 907,352 880,360 847,367']
	];
</script>

{#snippet glyph(body: string)}
	<svg width="16" height="16" viewBox="0 0 16 16" aria-hidden="true">{@html body}</svg>
{/snippet}

<div class="window">
	<header class="title">
		<svg width="11" height="11" viewBox="0 0 11 11" aria-hidden="true">
			<path d="M0 0h10v10H0z" fill="#cff" stroke="#066" /><path d="M2 0v8h7V2H4v4h3M5 4v6" fill="none" stroke="#066" />
		</svg>
		<span>AutoCAD 2007 - [C:\Users\Administrator\Desktop\视频演示\道路网格.dwg]</span>
		<button class="minimise" aria-label="最小化"><i></i></button>
		<button class="upload">
			<svg width="29" height="19" viewBox="0 0 29 19" aria-hidden="true">
				<path d="M0 0h29v19H0z" fill="#08c" />
				<g fill="none" stroke="#fff" stroke-width="2"><circle cx="15" cy="4" r="4" /><circle cx="10" cy="9" r="4" /><circle cx="20" cy="9" r="4" /></g>
			</svg>
			<span>拖拽上传</span>
		</button>
	</header>

	<nav class="menu">
		<svg width="16" height="16" viewBox="0 0 16 16" aria-hidden="true">
			<path d="M1 1h9l5 5v9H1z" fill="#258" /><path d="M1 10l5-3 4 3 5-1v6H1z" fill="#fc3" /><path d="M2 2l5 5M7 2v5H2" stroke="#cff" fill="none" />
		</svg>
		{#each menus as item}
			<button>{item}</button>
		{/each}
	</nav>

	<div class="toolbars">
		{#each rows as row}
			<div class="row">
				{#each row as bar}
					<div class="toolbar" role="toolbar">
						<i class="grip"></i>
						{#each bar as item}
							{#if typeof item !== 'string'}
								<div class="field" style="width: {item.width}px">
									{#if item.deco}<span class="deco">{@html item.deco}</span>{/if}
									<select
										class:big={item.big}
										aria-label={item.label}
										disabled={item.disabled}
										style="padding-left: {item.pad ?? 4}px"
									>
										<option>{item.value}</option>
									</select>
									<i class="caret"></i>
								</div>
							{:else if item === '|'}
								<i class="sep"></i>
							{:else if item === '▾' || item === '▿'}
								<button class="drop" class:off={item === '▿'} aria-label="更多"><i></i></button>
							{:else}
								<button class="tool" aria-label={item}>{@render glyph(icons[item])}</button>
							{/if}
						{/each}
					</div>
				{/each}
			</div>
		{/each}
	</div>

	<main>
		<aside class="panel">
			<div class="panel-bar">
				<button aria-label="折叠">{@render glyph(r(1.5, 3.5, 9, 9, '#fff', '#444') + p('M3 8h6', '#000', 'none', 2))}</button>
				<i></i>
				<button aria-label="关闭">{@render glyph(r(3.5, 3.5, 9, 9, '#fff', '#444') + p('M5 5l6 6m0-6l-6 6', '#000', 'none', 1.500))}</button>
			</div>
			<h2>SFLandscape</h2>
			<ul>
				{#each sections as item}
					<li><button><i></i>{item}</button></li>
				{/each}
			</ul>
		</aside>

		<div class="draw">
			<i class="hgrip"></i>
			{#each drawTools as [name, body]}
				<button aria-label={name}>{@render glyph(body)}</button>
			{/each}
		</div>

		<section class="drawing">
			<div class="canvas">
				<svg viewBox="127 151 1158 434" preserveAspectRatio="xMinYMin meet" shape-rendering="crispEdges" role="img" aria-label="道路网格">
					<defs>
						<pattern id="hatch" width="6" height="6" patternUnits="userSpaceOnUse" patternTransform="rotate(-12)">
							<path d="M1 4L4 1" stroke="#000" />
						</pattern>
					</defs>
					<g fill="none" stroke="#fff">
						<path d="M127 202L284 150M1178 150L1249 533 915 585" />
						<path d="M228 453L225 431 580 355 923 281Q946 272 946 240L968 237Q970 288 927 302L580 377Z" />
						<path d="M237 491L580 418 810 368 915 345C955 335 985 350 994 388L972 392Q966 362 930 365L620 431 241 512Z" />
						<path d="M303 459L302 456 977 311M303 459L980 314" />
					</g>
					{#each shapes as [fill, points]}
						<polygon {fill} {points} />
						{#if fill === '#f96'}<polygon fill="url(#hatch)" {points} />{/if}
					{/each}
					<g fill="none">
						<path d="M925 300Q960 282 958 238" stroke="#063" stroke-width="7" />
						<path d="M930 300Q966 280 964 238" stroke="#0f0" stroke-width="5" />
						<path d="M938 295Q969 275 967 245" stroke="#f96" stroke-width="2" />
						<path d="M945 350Q975 354 986 388" stroke="#063" stroke-width="6" />
						<path d="M918 345Q974 332 990 388" stroke="#0f0" stroke-width="2" />
						<path d="M960 347Q984 358 990 388" stroke="#0f0" stroke-width="6" />
						<path d="M965 350l10 8M957 275l2-4" stroke="#bbb" stroke-width="3" />
						<path d="M228 453L420 411M237 491L520 430" stroke="#939" stroke-dasharray="4 3" />
						<path d="M668 380L776 357M860 338L938 321" stroke="#f96" stroke-width="2" stroke-dasharray="5 1" />
						<path d="M440 428L480 419M560 402L668 379M776 357L860 338M940 321L977 313" stroke="#063" stroke-width="2" stroke-dasharray="9 2" />
					</g>
					<g stroke-linejoin="round">
						<path d="M977 276L982 300 951 308Z" fill="#063" stroke="#fff" stroke-width="3" />
						<path d="M977 277L981 299 952 307Z" fill="#063" stroke="#0f0" stroke-width="2" />
						<path d="M976 284L977 296 961 304Z" fill="#063" stroke="#f96" stroke-width="2" />
						<path d="M948 327L985 318 991 349Q978 332 948 327Z" fill="#063" stroke="#fff" stroke-width="2" />
						<path d="M950 327L985 319 989 345Q975 331 950 327Z" fill="#063" stroke="#f0f" stroke-width="2" />
						<path d="M958 327L982 322 985 338Q975 330 958 327Z" fill="#063" stroke="#f96" stroke-width="3" />
						<path d="M974 296h4M978 326l6 3" stroke="#bbb" stroke-width="3" />
					</g>
					<g fill="none" stroke="#fff">
						<path d="M228 453L580 377 927 302M237 491L580 418 810 368 915 345" stroke-dasharray="9 2" />
						<path d="M962 245h14M968 254l6 6M950 276l4 3M926 290l5 6M977 363h15" />
						{#each callouts as [x, y, len, lx, ly]}
							<path d="M{lx} {y}V{ly}" />
							<path d="M{x} {y}h{len}" stroke-width="2" />
							<path d="M{x + 1} {y - 1.5}h{len - 2}" stroke-dasharray="2 1 3 1" />
						{/each}
						<path d="M395 359.500h20" stroke-width="3" />
						<path d="M397 358.500h15" stroke="#000" stroke-dasharray="1 3" />
					</g>
					<g fill="none" stroke="#999">
						<path d="M996 208L1034 428" stroke-width="2" />
						<path d="M1001 402L1028 399M1031 408L1003 413 1001 402" />
						<path d="M981 428l4-2 1-4 4-4 4 1 4-4-1 5 3 1-5 4-6 2-4-1z" fill="#999" />
						<path d="M989 421l2 3M993 420l-2 1" stroke="#000" />
					</g>
					<g fill="none" stroke="#fff">
						<path d="M135.500 567.500h9v8h-9zM140.500 567V520M145 571.500h47" />
						<path d="M136.500 529.500l4-10 4 10zM181.500 567.500l11 4-11 4z" />
					</g>
					<text x="138" y="512">Y</text>
					<text x="200" y="577">X</text>
					<path d="M842 453v15l3-3 3 6 3-1-3-6h4z" fill="#fff" shape-rendering="auto" />
				</svg>
			</div>
			<div class="tabs">
				<button aria-label="第一个" class="step">{@render glyph(p('M4 4v8', '#000', 'none', 2) + p('M10 4v8L6 8z', '#000', '#000'))}</button>
				<button aria-label="上一个" class="step">{@render glyph(p('M10 4v8L6 8z', '#000', '#000'))}</button>
				<button aria-label="下一个" class="step">{@render glyph(p('M6 4v8l4-4z', '#000', '#000'))}</button>
				<button aria-label="最后一个" class="step">{@render glyph(p('M12 4v8', '#000', 'none', 2) + p('M6 4v8l4-4z', '#000', '#000'))}</button>
				<button class="tab active">模型</button>
				<button class="tab">布局1</button>
				<button class="tab">布局2</button>
			</div>
		</section>
	</main>

	<section class="command">
		<i class="grip"></i>
		<div class="console">
			<div class="history">
				{#each history as line}
					<p>{#each runs(line) as run}<span class:cjk={run.charCodeAt(0) >= 0x3000}>{run}</span>{/each}</p>
				{/each}
			</div>
			<div class="prompt">
				<label for="cmd">命令:</label>
				<input id="cmd" type="text" autocomplete="off" />
				<button aria-label="向左滚动"><i></i></button>
			</div>
		</div>
	</section>

	<footer>
		<output>1103441.3028, 117210.4444, 0.0000</output>
		{#each toggles as [name, on]}
			<button class="toggle" class:on class:latin={/^[A-Z]/.test(name)} aria-pressed={on}>{name}</button>
		{/each}
		<div class="ime">
			<svg width="132" height="26" viewBox="0 0 132 26" aria-label="输入法" role="img">
				<path d="M1 5L23 0l6 4-3 22H5z" fill="#f52" />
				<path d="M24 6C15 5 6 7 7 11s17 2 17 7c0 4-9 5-18 3" fill="none" stroke="#fff" stroke-width="4" />
				<g fill="none" stroke="#26c" stroke-width="2">
					<path d="M35 22l6-13 6 13M37 18h8" />
					<circle cx="85" cy="15" r="7" /><path d="M81 17q4 4 8 0M82 12v2M88 12v2" />
					<path d="M102 14q0 6 5 6t5-6M107 20v3" />
					<path d="M121 10h12v10h-12zM124 13h2M128 13h3M124 17h7" />
				</g>
				<rect x="104" y="7" width="6" height="10" rx="3" fill="#26c" />
				<circle cx="59" cy="12" r="2" fill="#26c" /><path d="M65 15h3v3l-3 4z" fill="#26c" />
			</svg>
		</div>
	</footer>
</div>

<style>
	:global(body) {
		background: #fff;
	}

	.window {
		display: flex;
		flex-direction: column;
		min-height: 100vh;
		box-sizing: border-box;
		border: 1px solid #000;
		border-top: none;
		overflow: hidden;
		font: 12px/16px 'Noto Sans', 'Noto Sans CJK SC', sans-serif;
		color: #000;
	}

	button,
	select,
	input {
		font: inherit;
		color: inherit;
		margin: 0;
		padding: 0;
		border: none;
		background: none;
		border-radius: 0;
	}

	svg {
		display: block;
		flex: none;
	}

	.title {
		position: relative;
		display: flex;
		height: 15px;
		border-bottom: 1px solid #999;
		font-size: 12px;
		line-height: 12px;
		background:
			radial-gradient(ellipse 30px 8px at 120px 13px, #79b, transparent),
			radial-gradient(ellipse 16px 8px at 188px 12px, #99c, transparent),
			radial-gradient(ellipse 30px 12px at 276px 8px, #b89, transparent),
			radial-gradient(ellipse 20px 6px at 365px 14px, #ccf, transparent),
			radial-gradient(ellipse 24px 6px at 440px 13px, #aac, transparent),
			radial-gradient(ellipse 18px 6px at 510px 12px, #ffc, transparent),
			linear-gradient(90deg, #cff 80%, #9ff 84%, #9cf 92%, #69a 96%, #79b);
	}

	.title::before {
		content: '';
		position: absolute;
		inset: 0 0 auto;
		border-top: 1px solid #000;
	}

	.title > span {
		padding-left: 4px;
		white-space: nowrap;
	}

	.upload {
		position: absolute;
		top: 1px;
		right: 115px;
		z-index: 1;
		display: flex;
		width: 104px;
		height: 19px;
		overflow: hidden;
		border-bottom: 1px solid #69a;
		border-radius: 0 0 4px 4px;
		background: linear-gradient(100deg, #ccf, #9df);
		line-height: 16px;
		color: #369;
	}

	.upload span {
		flex: 1;
	}

	.minimise {
		position: absolute;
		right: 0;
		top: 1px;
		width: 29px;
		height: 11px;
		border: 1px solid #689;
		border-top: none;
		border-radius: 0 0 0 4px;
		background: #abc;
	}

	.minimise i {
		display: block;
		width: 10px;
		height: 2px;
		margin: 0 auto 4px;
		border: 1px solid #543;
		background: #fff;
	}

	.menu {
		display: flex;
		align-items: center;
		gap: 15px;
		height: 18px;
		padding: 0 2px;
		border-bottom: 1px solid #ccc;
		background: linear-gradient(#fff 5px, #cff 5px 6px, #ccf 6px 17px, #cff 17px);
		color: #777;
		margin-bottom: 1px;
	}

	.menu svg {
		margin-right: -9px;
	}

	.menu button {
		white-space: nowrap;
		line-height: 16px;
		padding-top: 2px;
	}

	.row {
		display: flex;
		height: 25px;
		padding: 2px 0 1px;
	}

	.toolbar {
		display: flex;
		align-items: center;
		box-sizing: border-box;
		padding: 1px 4px 0 0;
		border-right: 1px solid #888;
		border-bottom: 1px solid #888;
	}

	.grip {
		align-self: stretch;
		box-sizing: border-box;
		width: 5px;
		margin: 0 3px 0 4px;
		border: solid #999;
		border-width: 0 1px;
	}

	.toolbar:first-child > .grip {
		width: 1px;
		margin-left: 3px;
		border-right: none;
	}

	.tool {
		display: grid;
		place-items: center;
		width: 23px;
		height: 22px;
	}

	.sep {
		box-sizing: border-box;
		width: 6px;
		height: 18px;
		background: linear-gradient(90deg, transparent 2px, #999 2px 3px, transparent 3px);
	}

	.drop {
		display: grid;
		place-items: center;
		width: 13px;
		height: 22px;
	}

	.drop i,
	.caret {
		border: 3px solid transparent;
		border-top: 3px solid #036;
		border-bottom: none;
	}

	.drop.off i {
		border-top-color: #ccc;
	}

	.field {
		position: relative;
		display: flex;
	}

	.field select {
		appearance: none;
		width: 100%;
		height: 22px;
		box-sizing: border-box;
		padding-top: 2px;
		border: 1px solid #99c;
		border-bottom-color: #cee;
		background: #fff;
		font: 10px 'Liberation Mono', 'Noto Sans CJK SC', monospace;
		color: #000;
		opacity: 1;
	}

	.field select.big {
		padding-top: 0;
		font: 12px 'Noto Sans CJK SC', sans-serif;
	}

	.field select:disabled {
		border-color: #888;
		border-radius: 3px;
		color: #777;
	}

	.caret {
		position: absolute;
		right: 5px;
		top: 10px;
		border-width: 4px 4px 0;
		border-top-color: #000;
		pointer-events: none;
	}

	select:disabled + .caret {
		border-top-color: #999;
	}

	.deco {
		position: absolute;
		left: 6px;
		top: 3px;
		pointer-events: none;
	}

	main {
		display: flex;
		flex: 1;
		padding-top: 1px;
	}

	.panel {
		width: 96px;
		border-right: 2px solid #999;
		border-bottom: 1px solid #999;
	}

	.panel-bar {
		display: flex;
		height: 14px;
	}

	.panel-bar button:first-child {
		margin-left: -3px;
	}

	.panel-bar i {
		flex: 1;
		height: 3px;
		margin-top: 6px;
		border: solid #999;
		border-width: 1px 0;
	}

	.panel-bar button:last-child {
		margin-right: 7px;
	}

	.panel h2 {
		width: 90px;
		margin: 0;
		border-right: 1px solid #888;
		border-bottom: 1px solid #888;
		background: #39f;
		color: #fff;
		font: bold 13px/28px 'DejaVu Sans Mono', monospace;
		text-align: center;
		white-space: nowrap;
	}

	.panel ul {
		list-style: none;
		margin: 0;
		padding: 0;
	}

	.panel li button {
		display: flex;
		align-items: center;
		gap: 9px;
		height: 24px;
		padding-left: 5px;
	}

	.panel li i {
		border: 6px solid transparent;
		border-left: 7px solid #39f;
		border-right: none;
	}

	.draw {
		align-self: flex-start;
		width: 24px;
		padding-bottom: 5px;
		border-right: 1px solid #999;
		border-bottom: 1px solid #999;
	}

	.draw button {
		display: grid;
		place-items: center;
		width: 24px;
		height: 22px;
	}

	.hgrip {
		display: block;
		height: 3px;
		margin: 3px 2px 2px;
		border: solid #999;
		border-width: 1px 0;
	}

	.drawing {
		display: flex;
		flex: 1;
		flex-direction: column;
		min-width: 0;
		margin-left: 1px;
		border-top: 2px solid #777;
		border-left: 2px solid #777;
	}

	.canvas {
		flex: 1;
		background: #000;
		overflow: hidden;
	}

	.canvas svg {
		width: 100%;
	}

	.canvas text {
		fill: #ddd;
		font: 14px 'Liberation Sans', sans-serif;
	}

	.tabs {
		display: flex;
		height: 15px;
		background: #fff;
	}

	.step {
		display: grid;
		place-items: center;
		width: 18px;
		border-right: 1px solid #bbb;
		overflow: hidden;
	}

	.tab {
		position: relative;
		padding: 0 2px;
		margin-left: 8px;
		line-height: 14px;
		border-bottom: 1px solid #000;
	}

	.tab::before,
	.tab::after {
		content: '';
		position: absolute;
		top: 0;
		bottom: 0;
		width: 4px;
	}

	.tab::before {
		left: -4px;
		border-left: 1px solid #000;
		transform: skewX(18deg);
	}

	.tab::after {
		right: -4px;
		border-right: 1px solid #000;
		transform: skewX(-18deg);
	}

	.tab.active,
	.tab.active::before,
	.tab.active::after {
		background: #000;
		color: #fff;
	}

	.command {
		display: flex;
		margin-top: 6px;
		padding-top: 9px;
		border-top: 2px solid #888;
	}

	.command > .grip {
		margin: 0 3px 4px;
	}

	.console {
		flex: 1;
		border-top: 2px solid #777;
		border-left: 2px solid #777;
	}

	.history {
		height: 57px;
		padding-top: 1px;
		border-bottom: 1px solid #999;
		font: 13px/16px 'Liberation Mono', monospace;
	}

	.history p {
		height: 16px;
		margin: 0;
		white-space: pre;
	}

	.cjk {
		font-family: 'Noto Sans CJK SC', sans-serif;
		font-size: 15px;
		line-height: 0;
	}

	.prompt {
		display: flex;
		height: 19px;
		font: 15px/17px 'Noto Sans CJK SC', sans-serif;
	}

	.prompt input {
		flex: 1;
		margin-left: 4px;
		outline: none;
	}

	.prompt button {
		width: 14px;
		border-top: 2px solid #ccc;
	}

	.prompt i {
		display: inline-block;
		border: 3px solid transparent;
		border-right: 4px solid #000;
		border-left: none;
		vertical-align: 6px;
	}

	footer {
		display: flex;
		gap: 4px;
		height: 20px;
		border-top: 1px solid #888;
		box-shadow: 0 3px #fff inset, 0 4px #999 inset;
		padding-top: 4px;
	}

	output {
		width: 249px;
		padding-left: 2px;
		border-right: 1px solid #888;
		font: 10px/20px 'Liberation Mono', monospace;
	}

	.toggle {
		box-sizing: border-box;
		padding: 0 1px;
		margin-top: 2px;
		border: 1px solid transparent;
		border-right-color: #999;
		border-bottom-color: #999;
		line-height: 16px;
		white-space: nowrap;
	}

	.toggle.on {
		border-color: #000 transparent transparent #000;
	}

	.toggle.latin {
		font: 10px/16px 'Liberation Mono', monospace;
	}

	.ime {
		height: 20px;
		margin: -8px 0 0 auto;
	}
</style>
